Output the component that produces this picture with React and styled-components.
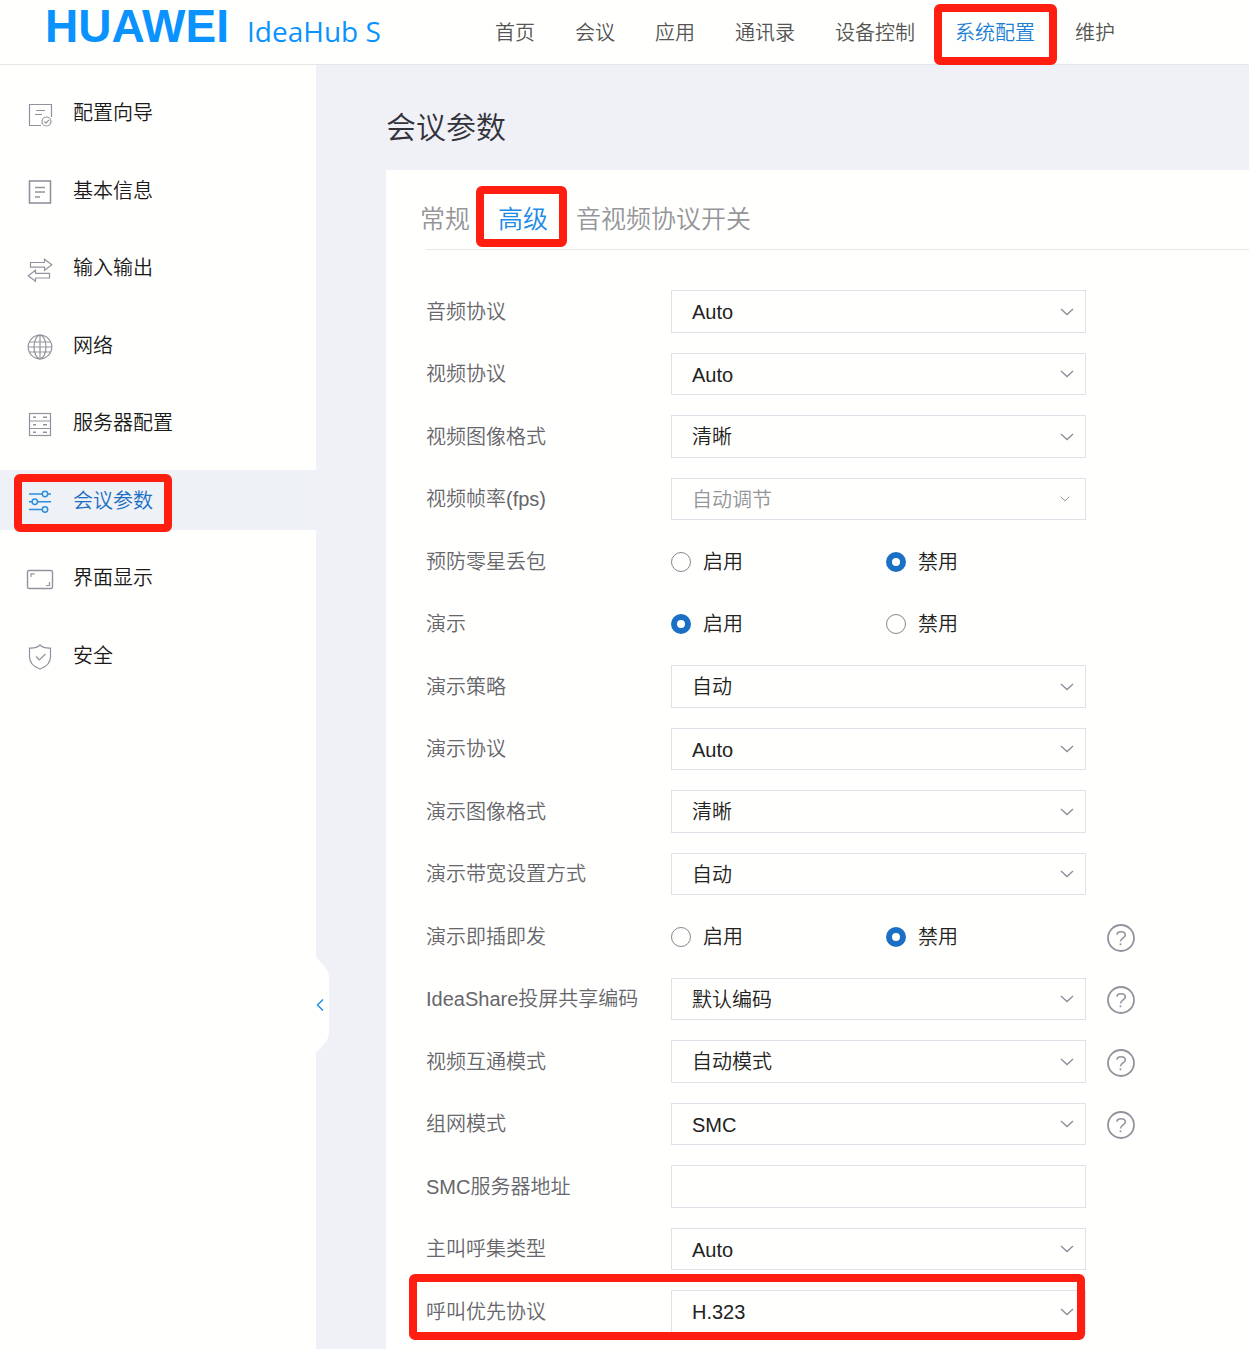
import React, { useState } from "react";
import styled, { createGlobalStyle, css } from "styled-components";

const navItems = ["首页", "会议", "应用", "通讯录", "设备控制", "系统配置", "维护"];

const menuItems = [
  { name: "配置向导", icon: "guide" },
  { name: "基本信息", icon: "info" },
  { name: "输入输出", icon: "io" },
  { name: "网络", icon: "network" },
  { name: "服务器配置", icon: "server" },
  { name: "会议参数", icon: "params" },
  { name: "界面显示", icon: "display" },
  { name: "安全", icon: "security" },
];

const tabs = ["常规", "高级", "音视频协议开关"];

const fields = [
  { id: "audio", label: "音频协议", type: "select", value: "Auto" },
  { id: "video", label: "视频协议", type: "select", value: "Auto" },
  { id: "videoFormat", label: "视频图像格式", type: "select", value: "清晰" },
  { id: "fps", label: "视频帧率(fps)", type: "select", value: "自动调节", disabled: true },
  { id: "packetLoss", label: "预防零星丢包", type: "radio", value: "禁用" },
  { id: "demo", label: "演示", type: "radio", value: "启用" },
  { id: "demoPolicy", label: "演示策略", type: "select", value: "自动" },
  { id: "demoProtocol", label: "演示协议", type: "select", value: "Auto" },
  { id: "demoFormat", label: "演示图像格式", type: "select", value: "清晰" },
  { id: "demoBandwidth", label: "演示带宽设置方式", type: "select", value: "自动" },
  { id: "plugAndSend", label: "演示即插即发", type: "radio", value: "禁用", help: true },
  { id: "ideaShare", label: "IdeaShare投屏共享编码", type: "select", value: "默认编码", help: true },
  { id: "interop", label: "视频互通模式", type: "select", value: "自动模式", help: true },
  { id: "network", label: "组网模式", type: "select", value: "SMC", help: true },
  { id: "smcAddress", label: "SMC服务器地址", type: "text", value: "" },
  { id: "callType", label: "主叫呼集类型", type: "select", value: "Auto" },
  { id: "callProtocol", label: "呼叫优先协议", type: "select", value: "H.323", marked: true },
];

const icons = {
  guide: (
    <>
      <path d="M15 25.5H3.5v-21h22V17M10 10.5h9M9 14.5h7" />
      <circle cx="20.5" cy="21.5" r="4.5" />
      <path d="M18.3 21.5l1.7 1.6 3-3.2" />
    </>
  ),
  info: (
    <g strokeWidth="1.6">
      <rect x="3.5" y="3" width="21" height="22" />
      <path d="M9 9.5h10M9 14h10M9 19h5" />
    </g>
  ),
  io: (
    <>
      <path d="M4.5 7.5h14V4.2l7.3 5.6-7.3 5.4v-3h-14z" />
      <path d="M23.5 23h-14v3.3L2.2 20.7l7.3-5.4v3h14z" />
    </>
  ),
  network: (
    <>
      <circle cx="14" cy="14" r="11.8" />
      <ellipse cx="14" cy="14" rx="6" ry="11.8" />
      <path d="M14 2v24M2 14h24M3.5 9h21M3.5 19h21" />
    </>
  ),
  server: (
    <>
      <rect x="3.5" y="3.5" width="21" height="22" />
      <path d="M3.5 11h21M3.5 18.5h21" />
      <path d="M7 7.3h3M17 7.3h4M7 14.8h3M17 14.8h4M7 22.3h3M17 22.3h4" strokeWidth="1.6" />
    </>
  ),
  params: (
    <g strokeWidth="1.5">
      <path d="M3 6h13M22 6h3M3 13.8h3M11.5 13.8H25M3 21.5h13" />
      <circle cx="19" cy="6" r="2.7" />
      <circle cx="8.8" cy="13.8" r="2.7" />
      <circle cx="19" cy="21.5" r="2.7" />
    </g>
  ),
  display: (
    <>
      <rect x="1.5" y="5.5" width="25" height="18" rx="1.5" strokeWidth="1.4" />
      <path d="M5 12V8.8h3.5M23.5 17v3.5H20" />
    </>
  ),
  security: (
    <>
      <path d="M14 2c2.3 2.2 6.500 3.200 10.500 3v8.500c0 6-4.500 10.500-10.500 12.500-6-2-10.500-6.500-10.500-12.500V5c4 .2 8.200-.8 10.500-3z" />
      <path d="M10 13.500l3.300 3.400 6.200-5.900" />
    </>
  ),
};

const Select = ({ field }) => (
  <SelectBox>
    <StyledSelect id={field.id} defaultValue={field.value} disabled={field.disabled}>
      <option>{field.value}</option>
    </StyledSelect>
    <Chevron viewBox="0 0 14 8" $small={field.disabled} aria-hidden="true">
      <path d="M1 1l6 5.500L13 1" />
    </Chevron>
  </SelectBox>
);

const RadioPair = ({ field }) => {
  const [value, setValue] = useState(field.value);

  return (
    <Radios role="radiogroup" aria-labelledby={field.id}>
      {["启用", "禁用"].map((option) => (
        <RadioLabel key={option}>
          <Radio
            type="radio"
            name={field.id}
            checked={value === option}
            onChange={() => setValue(option)}
          />
          {option}
        </RadioLabel>
      ))}
    </Radios>
  );
};

const Field = ({ field }) => (
  <Row $marked={field.marked}>
    {field.type === "radio" ? (
      <Label as="span" id={field.id}>{field.label}</Label>
    ) : (
      <Label htmlFor={field.id}>{field.label}</Label>
    )}
    {field.type === "select" && <Select field={field} />}
    {field.type === "radio" && <RadioPair field={field} />}
    {field.type === "text" && <TextInput type="text" id={field.id} />}
    {field.help && (
      <HelpButton type="button" aria-label={`${field.label} 帮助`}>
        <svg width="28" height="28" viewBox="0 0 28 28" fill="none" stroke="currentColor">
          <circle cx="14" cy="14" r="13" strokeWidth="1.8" />
          <path d="M9.8 10.600c.4-1.900 2-2.800 4.200-2.800 2.500 0 4.300 1.100 4.300 3.100 0 3-4.800 2.900-4.800 6.600" strokeWidth="1.600" />
          <path d="M12.600 20.300h1.800" strokeWidth="1.800" />
        </svg>
      </HelpButton>
    )}
  </Row>
);

const App = () => {
  const [activeTab, setActiveTab] = useState("高级");

  return (
    <>
      <GlobalStyle />
      <Page>
        <Header>
          <Brand href="#">
            <BrandName>HUAWEI</BrandName>
            <ProductName>IdeaHub S</ProductName>
          </Brand>
          <Nav>
            {navItems.map((item) => (
              <NavLink key={item} href="#" $active={item === "系统配置"}>
                {item}
              </NavLink>
            ))}
          </Nav>
        </Header>
        <Body>
          <Sidebar>
            <Menu>
              {menuItems.map((item) => (
                <MenuLink key={item.name} href="#" $active={item.name === "会议参数"}>
                  <MenuIcon viewBox="0 0 28 28" aria-hidden="true">
                    {icons[item.icon]}
                  </MenuIcon>
                  {item.name}
                </MenuLink>
              ))}
            </Menu>
            <CollapseButton type="button" aria-label="收起菜单">
              <svg width="13" height="96" viewBox="0 0 13 96" fill="none">
                <path d="M0 0l9 10q4 5 4 11v54q0 6-4 11l-9 10z" fill="#fffffd" />
                <path d="M7 42.500l-5.500 5.500 5.500 5.500" stroke="#1c8ae6" strokeWidth="1.400" />
              </svg>
            </CollapseButton>
          </Sidebar>
          <Main>
            <Title>会议参数</Title>
            <Panel>
              <Tabs>
                {tabs.map((tab) => (
                  <Tab
                    key={tab}
                    type="button"
                    $active={tab === activeTab}
                    onClick={() => setActiveTab(tab)}
                  >
                    {tab}
                  </Tab>
                ))}
              </Tabs>
              <Form>
                {fields.map((field) => (
                  <Field key={field.id} field={field} />
                ))}
              </Form>
            </Panel>
          </Main>
        </Body>
      </Page>
    </>
  );
};

export default App;

const GlobalStyle = createGlobalStyle`
  *, *::after {
    box-sizing: border-box;
  }
  body {
    margin: 0;
    background: #fffffd;
    color: #222;
    font-family: "Liberation Sans", "Noto Sans CJK SC", sans-serif;
    font-size: 20px;
    font-weight: 350;
    line-height: 30px;
  }
  a {
    text-decoration: none;
  }
  button, input, select {
    font: inherit;
    color: inherit;
  }
  button {
    padding: 0;
    border: 0;
    background: none;
    cursor: pointer;
  }
`

// red frame drawn over the things the user should look at
const frame = css`
  position: relative;
  &::after {
    content: "";
    position: absolute;
    border: 8px solid #ff1e10;
    border-radius: 6px;
    pointer-events: none;
    z-index: 1;
  }
`

const Page = styled.div`
  display: flex;
  flex-direction: column;
  min-height: 100vh;
`

const Header = styled.header`
  display: flex;
  height: 65px;
  border-bottom: 1px solid #e6e7eb;
`

const Brand = styled.a`
  display: flex;
  align-items: baseline;
  flex: none;
  width: 495px;
  padding-left: 45px;
  gap: 18px;
  color: #0a93ff;
  line-height: 52px;
`

const BrandName = styled.span`
  font-size: 46px;
  font-weight: 700;
`

const ProductName = styled.span`
  font-family: "Open Sans", "Noto Sans", sans-serif;
  font-size: 28px;
  font-weight: 400;
`

const Nav = styled.nav`
  display: flex;
  gap: 40px;
  white-space: nowrap;
`

const NavLink = styled.a`
  height: 64px;
  line-height: 66px;
  color: ${(props) => (props.$active ? "#1c7fd6" : "#555")};
  ${(props) =>
    props.$active &&
    css`
      ${frame}
      &::after {
        inset: 4px -22px -1px -21px;
      }
    `}
`

const Body = styled.div`
  display: flex;
  flex: 1;
`

const Sidebar = styled.aside`
  position: relative;
  flex: none;
  width: 316px;
`

const Menu = styled.nav`
  display: grid;
  grid-auto-rows: 78px 77px;
  align-items: start;
  padding-top: 17px;
`

const MenuLink = styled.a`
  display: flex;
  align-items: center;
  gap: 19px;
  height: 60px;
  padding: 2px 0 0 26px;
  color: ${(props) => (props.$active ? "#1c6fc4" : "#1a1a1a")};
  background: ${(props) => (props.$active ? "#eef1f5" : "none")};
  svg {
    stroke: ${(props) => (props.$active ? "#2a8fe0" : "#93939f")};
  }
  ${(props) =>
    props.$active &&
    css`
      ${frame}
      &::after {
        top: 4px;
        left: 14px;
        width: 158px;
        height: 58px;
      }
    `}
`

const MenuIcon = styled.svg`
  width: 28px;
  height: 28px;
  margin-top: 2px;
  fill: none;
  stroke-width: 1.2;
`

const CollapseButton = styled.button`
  position: absolute;
  top: 892px;
  left: 100%;
  svg {
    display: block;
  }
`

const Main = styled.main`
  display: flex;
  flex-direction: column;
  flex: 1;
  min-width: 0;
  padding-left: 70px;
  background: #eff1f6;
`

const Title = styled.h1`
  margin: 0;
  padding: 41px 0 20px;
  font-size: 30px;
  font-weight: 350;
  line-height: 44px;
  color: #33333b;
`

const Panel = styled.section`
  flex: 1;
  padding: 0 0 16px 40px;
  background: #fffffd;
`

const Tabs = styled.div`
  display: flex;
  gap: 28px;
  height: 80px;
  margin-left: -6px;
  padding-top: 16px;
  background: linear-gradient(#e8e8ec, #e8e8ec) 6px 100% / 100% 1px no-repeat;
`

const Tab = styled.button`
  height: 64px;
  padding-top: 2px;
  font-size: 25px;
  color: ${(props) => (props.$active ? "#1c8ae6" : "#95959a")};
  ${(props) =>
    props.$active &&
    css`
      ${frame}
      &::after {
        inset: 0 -19px 3px -22px;
      }
    `}
`

const Form = styled.form`
  display: grid;
  grid-auto-rows: 43px 42px;
  row-gap: 20px;
  padding-top: 40px;
`

const Row = styled.div`
  display: grid;
  grid-template-columns: 245px minmax(0, 415px) 49px;
  align-items: center;
  ${(props) =>
    props.$marked &&
    css`
      ${frame}
      &::after {
        inset: -16px auto -7px -17px;
        width: 676px;
      }
    `}
`

const Label = styled.label`
  color: #66666c;
`

const SelectBox = styled.div`
  display: grid;
  align-items: center;
  height: 100%;
  > * {
    grid-area: 1 / 1;
  }
`

const inputStyle = css`
  width: 100%;
  height: 100%;
  padding: 1px 20px 0;
  border: 1px solid #e1e1e7;
  border-radius: 0;
  background: #fffffd;
  outline: none;
`

const StyledSelect = styled.select`
  ${inputStyle}
  appearance: none;
  color: #222;
  &:disabled {
    color: #95959c;
    opacity: 1;
  }
`

const TextInput = styled.input`
  ${inputStyle}
`

const Chevron = styled.svg`
  justify-self: end;
  width: ${(props) => (props.$small ? "10px" : "14px")};
  height: 8px;
  margin-right: ${(props) => (props.$small ? "16px" : "12px")};
  fill: none;
  stroke: #8c8c98;
  stroke-width: 1.3;
  pointer-events: none;
`

const Radios = styled.div`
  display: grid;
  grid-template-columns: 215px 1fr;
`

const RadioLabel = styled.label`
  display: flex;
  align-items: center;
  gap: 12px;
`

const Radio = styled.input`
  appearance: none;
  width: 20px;
  height: 20px;
  margin: 0;
  border: 1px solid #85858f;
  border-radius: 50%;
  background: #fffffd;
  &:checked {
    border: 6px solid #1a70c5;
  }
`

const HelpButton = styled.button`
  width: 28px;
  height: 28px;
  margin: 2px 0 0 21px;
  color: #93939f;
  svg {
    display: block;
  }
`
